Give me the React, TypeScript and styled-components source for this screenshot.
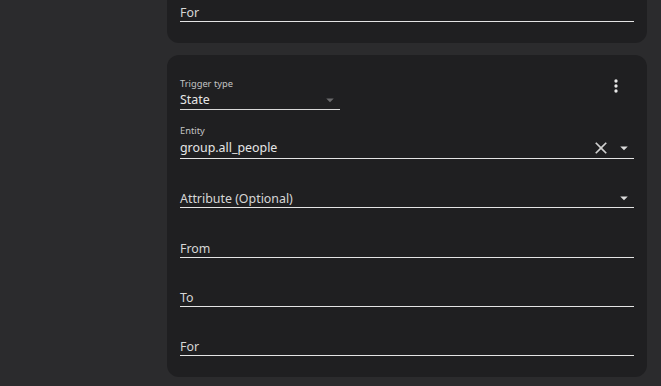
import React from "react";
import styled, { createGlobalStyle } from "styled-components";

const GlobalStyle = createGlobalStyle`
  html, body {
    margin: 0;
    padding: 0;
    background: #2b2b2d;
    overflow: hidden;
  }
  body {
    font-family: "Noto Sans", "Open Sans", sans-serif;
    color: #e1e1e1;
  }
`;

const Page = styled.div`
  width: 480px;
  margin-left: 167px;
  display: flex;
  flex-direction: column;
  gap: 12px;
`;

const Card = styled.div<{ $offset?: number }>`
  background: #1f1f21;
  border-radius: 12px;
  padding: 14px 13px 20.5px;
  margin-top: ${(p) => (p.$offset ? `${p.$offset}px` : "0")};
  display: flex;
  flex-direction: column;
  gap: 8.4px;
`;

const HeaderRow = styled.div`
  display: flex;
  align-items: flex-start;
  justify-content: space-between;
`;

const Field = styled.div<{ $width?: number }>`
  height: 40px;
  width: ${(p) => (p.$width ? `${p.$width}px` : "100%")};
  border-bottom: 1px solid ${(p) => (p.$width ? "#d8d8d8" : "#e4e4e4")};
  display: flex;
  flex-direction: column;
  justify-content: flex-end;
`;

const Label = styled.div`
  font-size: 9.3px;
  line-height: 15px;
  color: #c4c4c4;
`;

const Value = styled.div<{ $placeholder?: boolean }>`
  font-size: 12.4px;
  line-height: 17px;
  color: ${(p) => (p.$placeholder ? "#d6d6d6" : "#e6e6e6")};
  display: flex;
  align-items: center;
  justify-content: space-between;
  white-space: nowrap;
`;

const Icons = styled.div`
  display: flex;
  align-items: center;
  gap: 4px;
  margin-right: 1.5px;
`;

const IconButton = styled.div`
  width: 24px;
  height: 24px;
  display: flex;
  align-items: center;
  justify-content: center;
  margin-top: 5px;
  margin-right: 6px;
  color: #e8e8e8;
`;

const MenuDown = ({ dim }: { dim?: boolean }) => (
  <svg width="18" height="18" viewBox="0 0 24 24" fill={dim ? "#6a6a6c" : "#dcdcdc"}>
    <path d="M7,10L12,15L17,10H7Z" />
  </svg>
);

const Close = () => (
  <svg width="20" height="20" viewBox="0 0 24 24" fill="#d0d0d0">
    <path d="M19,6.41L17.59,5L12,10.59L6.41,5L5,6.41L10.59,12L5,17.59L6.41,19L12,13.41L17.59,19L19,17.59L13.41,12L19,6.41Z" />
  </svg>
);

const DotsVertical = () => (
  <svg width="20" height="20" viewBox="0 0 24 24" fill="currentColor">
    <path d="M12,16A2,2 0 0,1 14,18A2,2 0 0,1 12,20A2,2 0 0,1 10,18A2,2 0 0,1 12,16M12,10A2,2 0 0,1 14,12A2,2 0 0,1 12,14A2,2 0 0,1 10,12A2,2 0 0,1 12,10M12,4A2,2 0 0,1 14,6A2,2 0 0,1 12,8A2,2 0 0,1 10,6A2,2 0 0,1 12,4Z" />
  </svg>
);

const optionalFields = ["From", "To", "For"];

export default function App() {
  return (
    <>
      <GlobalStyle />
      <Page>
        <Card $offset={-33}>
          <Field>
            <Value $placeholder>For</Value>
          </Field>
        </Card>

        <Card>
          <HeaderRow>
            <Field $width={160}>
              <Label>Trigger type</Label>
              <Value>
                State
                <Icons>
                  <MenuDown dim />
                </Icons>
              </Value>
            </Field>
            <IconButton>
              <DotsVertical />
            </IconButton>
          </HeaderRow>

          <Field>
            <Label>Entity</Label>
            <Value>
              group.all_people
              <Icons>
                <Close />
                <MenuDown />
              </Icons>
            </Value>
          </Field>

          <Field>
            <Value $placeholder>
              Attribute (Optional)
              <Icons>
                <MenuDown />
              </Icons>
            </Value>
          </Field>

          {optionalFields.map((name) => (
            <Field key={name}>
              <Value $placeholder>{name}</Value>
            </Field>
          ))}
        </Card>
      </Page>
    </>
  );
}
